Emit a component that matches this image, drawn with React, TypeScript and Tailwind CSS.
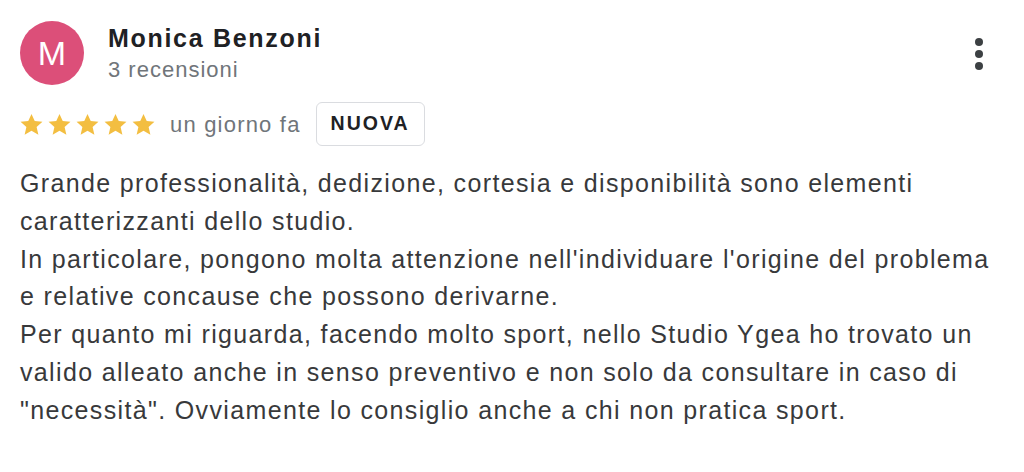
import React from "react";

const Star = () => (
  <svg viewBox="0 0 24 24" className="w-[25px] h-[25px]" fill="#f3be41">
    <path d="M12 1.8l3.1 6.9 7.4.7-5.6 5 1.7 7.4L12 17.9l-6.6 3.9 1.7-7.4-5.6-5 7.4-.7z" />
  </svg>
);

// lines broken where the card breaks them
const lines = [
  "Grande professionalità, dedizione, cortesia e disponibilità sono elementi",
  "caratterizzanti dello studio.",
  "In particolare, pongono molta attenzione nell'individuare l'origine del problema",
  "e relative concause che possono derivarne.",
  "Per quanto mi riguarda, facendo molto sport, nello Studio Ygea ho trovato un",
  "valido alleato anche in senso preventivo e non solo da consultare in caso di",
  '"necessità". Ovviamente lo consiglio anche a chi non pratica sport.',
];

const ReviewCard = () => {
  return (
    <section className="w-[1024px] h-[472px] bg-white px-5 pt-[21px] font-['Liberation_Sans',Arial,sans-serif]">
      <div className="flex items-start">
        <div className="w-16 h-16 rounded-full bg-[#dc4f79] flex items-center justify-center text-white text-[34px] leading-none">
          M
        </div>
        <div className="ml-6 flex-1 pt-[3px]">
          <h1 className="text-[25px] leading-7 font-bold tracking-[1.7px] text-[#202124]">
            Monica Benzoni
          </h1>
          <p className="text-[22px] leading-[26px] tracking-[1px] text-[#70757a] mt-[5px]">
            3 recensioni
          </p>
        </div>
        <div className="flex flex-col gap-1 items-center pt-[17px] pr-[21px]">
          <span className="w-2 h-2 rounded-full bg-[#3c4043]" />
          <span className="w-2 h-2 rounded-full bg-[#3c4043]" />
          <span className="w-2 h-2 rounded-full bg-[#3c4043]" />
        </div>
      </div>

      <div className="flex items-center mt-[17px]">
        <div className="flex gap-[3px] -ml-[1px]">
          <Star />
          <Star />
          <Star />
          <Star />
          <Star />
        </div>
        <span className="ml-[14px] text-[22px] tracking-[1.2px] text-[#70757a]">
          un giorno fa
        </span>
        <span className="ml-[15px] h-[44px] px-[14px] flex items-center border border-[#dadce0] rounded-md text-[19.5px] font-bold tracking-[2px] text-[#202124]">
          NUOVA
        </span>
      </div>

      <div className="mt-[19px] text-[25px] leading-[37.8px] tracking-[1.35px] text-[#38393b] whitespace-nowrap">
        {lines.map((line, i) => (
          <p key={i}>{line}</p>
        ))}
      </div>
    </section>
  );
};

export default function App() {
  return <ReviewCard />;
}
